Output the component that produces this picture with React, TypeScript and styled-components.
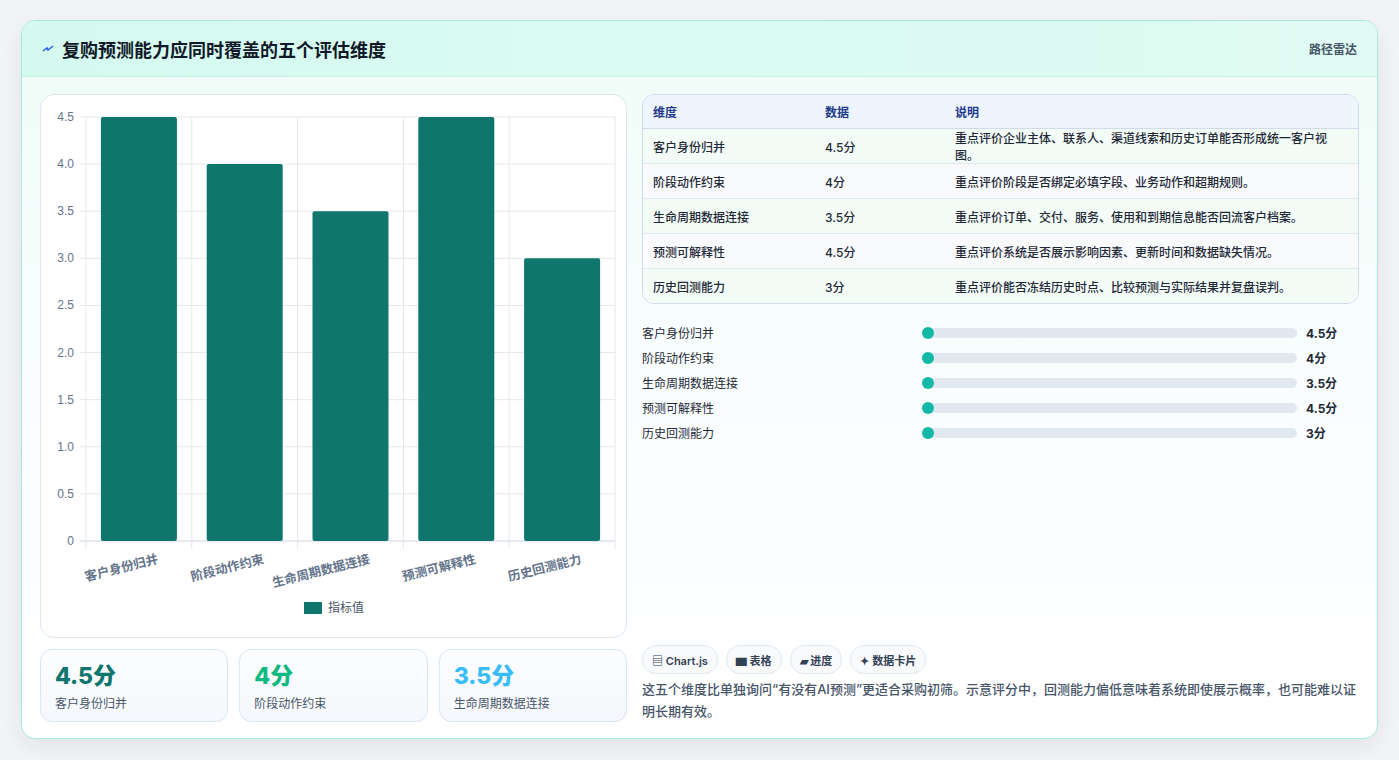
import React from 'react';
import styled, { createGlobalStyle } from 'styled-components';

const GlobalStyle = createGlobalStyle`
  body {
    margin: 0;
    background: #f3f4f6;
    font-family: Inter, "Noto Sans CJK SC", "Noto Sans", sans-serif;
  }
`;

const rows = [
  { name: '客户身份归并', value: 4.5, note: '重点评价企业主体、联系人、渠道线索和历史订单能否形成统一客户视图。' },
  { name: '阶段动作约束', value: 4, note: '重点评价阶段是否绑定必填字段、业务动作和超期规则。' },
  { name: '生命周期数据连接', value: 3.5, note: '重点评价订单、交付、服务、使用和到期信息能否回流客户档案。' },
  { name: '预测可解释性', value: 4.5, note: '重点评价系统是否展示影响因素、更新时间和数据缺失情况。' },
  { name: '历史回测能力', value: 3, note: '重点评价能否冻结历史时点、比较预测与实际结果并复盘误判。' },
];

const Page = styled.div`
  padding: 20px 21px 20px 21px;
`;

const Card = styled.div`
  width: 1357px;
  height: 719px;
  box-sizing: border-box;
  border: 1px solid #a7e9df;
  border-radius: 14px;
  background: linear-gradient(180deg, #effdf8 0%, #fbfdff 60%, #ffffff 100%);
  box-shadow: 0 8px 24px rgba(15, 23, 42, 0.08);
  overflow: hidden;
  display: flex;
  flex-direction: column;
`;

const Header = styled.div`
  height: 55px;
  flex-shrink: 0;
  display: flex;
  align-items: center;
  justify-content: space-between;
  padding: 0 20px;
  background: linear-gradient(90deg, #d4faf0, #e0fbf3);
  border-bottom: 1px solid #c9efe6;
`;

const Title = styled.h1`
  margin: 0;
  font-size: 18px;
  font-weight: 700;
  color: #111827;
  display: flex;
  align-items: center;
  gap: 8px;
`;

const Brand = styled.span`
  font-size: 12px;
  color: #475569;
  font-weight: 600;
`;

const Body = styled.div`
  flex: 1;
  display: grid;
  grid-template-columns: 587px 1fr;
  gap: 15px;
  padding: 17px 18px 18px 18px;
`;

const Column = styled.div`
  display: flex;
  flex-direction: column;
  gap: 11px;
  min-height: 0;
`;

const ChartCard = styled.div`
  height: 544px;
  box-sizing: border-box;
  background: #fff;
  border: 1px solid #dde5ee;
  border-radius: 14px;
`;

const KpiRow = styled.div`
  display: grid;
  grid-template-columns: repeat(3, 1fr);
  gap: 11px;
`;

const Kpi = styled.div`
  height: 73px;
  box-sizing: border-box;
  border: 1px solid #d9e6f3;
  border-radius: 12px;
  background: linear-gradient(180deg, #fbfdff, #f5f8fc);
  padding: 10px 14px;
`;

const KpiValue = styled.div<{ $color: string }>`
  font-size: 23px;
  font-weight: 800;
  color: ${p => p.$color};
  line-height: 32px;
`;

const KpiLabel = styled.div`
  font-size: 12px;
  color: #475569;
  margin-top: 2px;
`;

const Table = styled.table`
  width: 100%;
  border-collapse: separate;
  border-spacing: 0;
  border: 1px solid #cfdbe8;
  border-radius: 12px;
  overflow: hidden;
  font-size: 12px;
  background: #fff;
`;

const Th = styled.th`
  text-align: left;
  font-weight: 700;
  color: #1e3a8a;
  background: #eef5fe;
  height: 33px;
  padding: 0 10px;
  border-bottom: 1px solid #cfdbe8;
`;

const Tr = styled.tr<{ $alt: boolean }>`
  background: ${p => (p.$alt ? '#f8fafc' : '#f4fcf8')};
`;

const Td = styled.td<{ $last: boolean }>`
  height: 34px;
  padding: 0 10px;
  color: #1f2937;
  font-weight: 500;
  border-bottom: ${p => (p.$last ? 'none' : '1px solid #dfe7ef')};
`;

const Progress = styled.div`
  display: flex;
  flex-direction: column;
  gap: 6px;
  margin-top: 8px;
`;

const ProgressRow = styled.div`
  display: grid;
  grid-template-columns: 271px 375px 1fr;
  gap: 9px;
  align-items: center;
  height: 19px;
  font-size: 12px;
  color: #1f2937;
`;

const Track = styled.div`
  height: 10px;
  border-radius: 5px;
  background: #e2e8f0;
  position: relative;
`;

const Fill = styled.div`
  position: absolute;
  left: 0;
  top: -1px;
  width: 12px;
  height: 12px;
  border-radius: 6px;
  background: #14b8a6;
`;

const ProgressValue = styled.span`
  font-weight: 700;
`;

const Spacer = styled.div`
  flex: 1;
`;

const Chips = styled.div`
  display: flex;
  gap: 8px;
`;

const Chip = styled.span`
  height: 27px;
  display: inline-flex;
  align-items: center;
  padding: 0 9px;
  border: 1px solid #e2e8f0;
  border-radius: 14px;
  background: #f8fafc;
  font-size: 11px;
  font-weight: 600;
  color: #334155;
`;

const Note = styled.p`
  margin: 4px 0 0;
  font-size: 13px;
  line-height: 22px;
  color: #475569;
  font-weight: 500;
`;

function BarChart() {
  const left = 45;
  const right = 574;
  const top = 22;
  const bottom = 446;
  const step = (right - left) / 5;
  const ticks = [0, 0.5, 1, 1.5, 2, 2.5, 3, 3.5, 4, 4.5];
  const y = (v: number) => bottom - (v / 4.5) * (bottom - top);
  return (
    <svg width="585" height="542" viewBox="0 0 585 542" style={{ display: 'block' }}>
      {ticks.map(t => (
        <g key={t}>
          <line x1={left - 6} x2={right} y1={y(t)} y2={y(t)} stroke={t === 0 ? '#cbd5e1' : '#e5e7eb'} />
          <text x={left - 12} y={y(t) + 4} fontSize="12" fill="#64748b" textAnchor="end" fontFamily="Liberation Sans, sans-serif">
            {t === 0 ? '0' : t.toFixed(1)}
          </text>
        </g>
      ))}
      {[0, 1, 2, 3, 4, 5].map(i => (
        <line key={i} x1={left + i * step} x2={left + i * step} y1={top} y2={bottom + 8} stroke="#e5e7eb" />
      ))}
      {rows.map((r, i) => {
        const cx = left + step * i + step / 2;
        return (
          <g key={r.name}>
            <rect x={cx - 38} y={y(r.value)} width="76" height={bottom - y(r.value)} rx="2" fill="#0f766e" />
            <text
              x={cx + 20}
              y={bottom + 22}
              fontSize="12.5"
              fontWeight="600"
              fill="#64748b"
              textAnchor="end"
              transform={`rotate(-14 ${cx + 20} ${bottom + 22})`}
            >
              {r.name}
            </text>
          </g>
        );
      })}
      <rect x="263" y="507" width="18" height="12" fill="#0f766e" />
      <text x="287" y="517" fontSize="12" fill="#475569">指标值</text>
    </svg>
  );
}

export default function App() {
  return (
    <Page>
      <GlobalStyle />
      <Card>
        <Header>
          <Title>
            <svg width="12" height="12" viewBox="0 0 12 12">
              <path d="M1 8 L5 5 L6 7 L11 3" stroke="#2563eb" strokeWidth="1.5" fill="none" />
            </svg>
            复购预测能力应同时覆盖的五个评估维度
          </Title>
          <Brand>路径雷达</Brand>
        </Header>
        <Body>
          <Column>
            <ChartCard>
              <BarChart />
            </ChartCard>
            <KpiRow>
              <Kpi>
                <KpiValue $color="#0f766e">4.5分</KpiValue>
                <KpiLabel>客户身份归并</KpiLabel>
              </Kpi>
              <Kpi>
                <KpiValue $color="#10b981">4分</KpiValue>
                <KpiLabel>阶段动作约束</KpiLabel>
              </Kpi>
              <Kpi>
                <KpiValue $color="#38bdf8">3.5分</KpiValue>
                <KpiLabel>生命周期数据连接</KpiLabel>
              </Kpi>
            </KpiRow>
          </Column>
          <Column>
            <Table>
              <thead>
                <tr>
                  <Th style={{ width: 152 }}>维度</Th>
                  <Th style={{ width: 110 }}>数据</Th>
                  <Th>说明</Th>
                </tr>
              </thead>
              <tbody>
                {rows.map((r, i) => (
                  <Tr key={r.name} $alt={i % 2 === 1}>
                    <Td $last={i === rows.length - 1}>{r.name}</Td>
                    <Td $last={i === rows.length - 1}>{r.value}分</Td>
                    <Td $last={i === rows.length - 1}>{r.note}</Td>
                  </Tr>
                ))}
              </tbody>
            </Table>
            <Progress>
              {rows.map(r => (
                <ProgressRow key={r.name}>
                  <span>{r.name}</span>
                  <Track>
                    <Fill />
                  </Track>
                  <ProgressValue>{r.value}分</ProgressValue>
                </ProgressRow>
              ))}
            </Progress>
            <Spacer />
            <div>
              <Chips>
                <Chip>▤ Chart.js</Chip>
                <Chip>▆ 表格</Chip>
                <Chip>▰ 进度</Chip>
                <Chip>✦ 数据卡片</Chip>
              </Chips>
              <Note>
                这五个维度比单独询问“有没有AI预测”更适合采购初筛。示意评分中，回测能力偏低意味着系统即使展示概率，也可能难以证明长期有效。
              </Note>
            </div>
          </Column>
        </Body>
      </Card>
    </Page>
  );
}
